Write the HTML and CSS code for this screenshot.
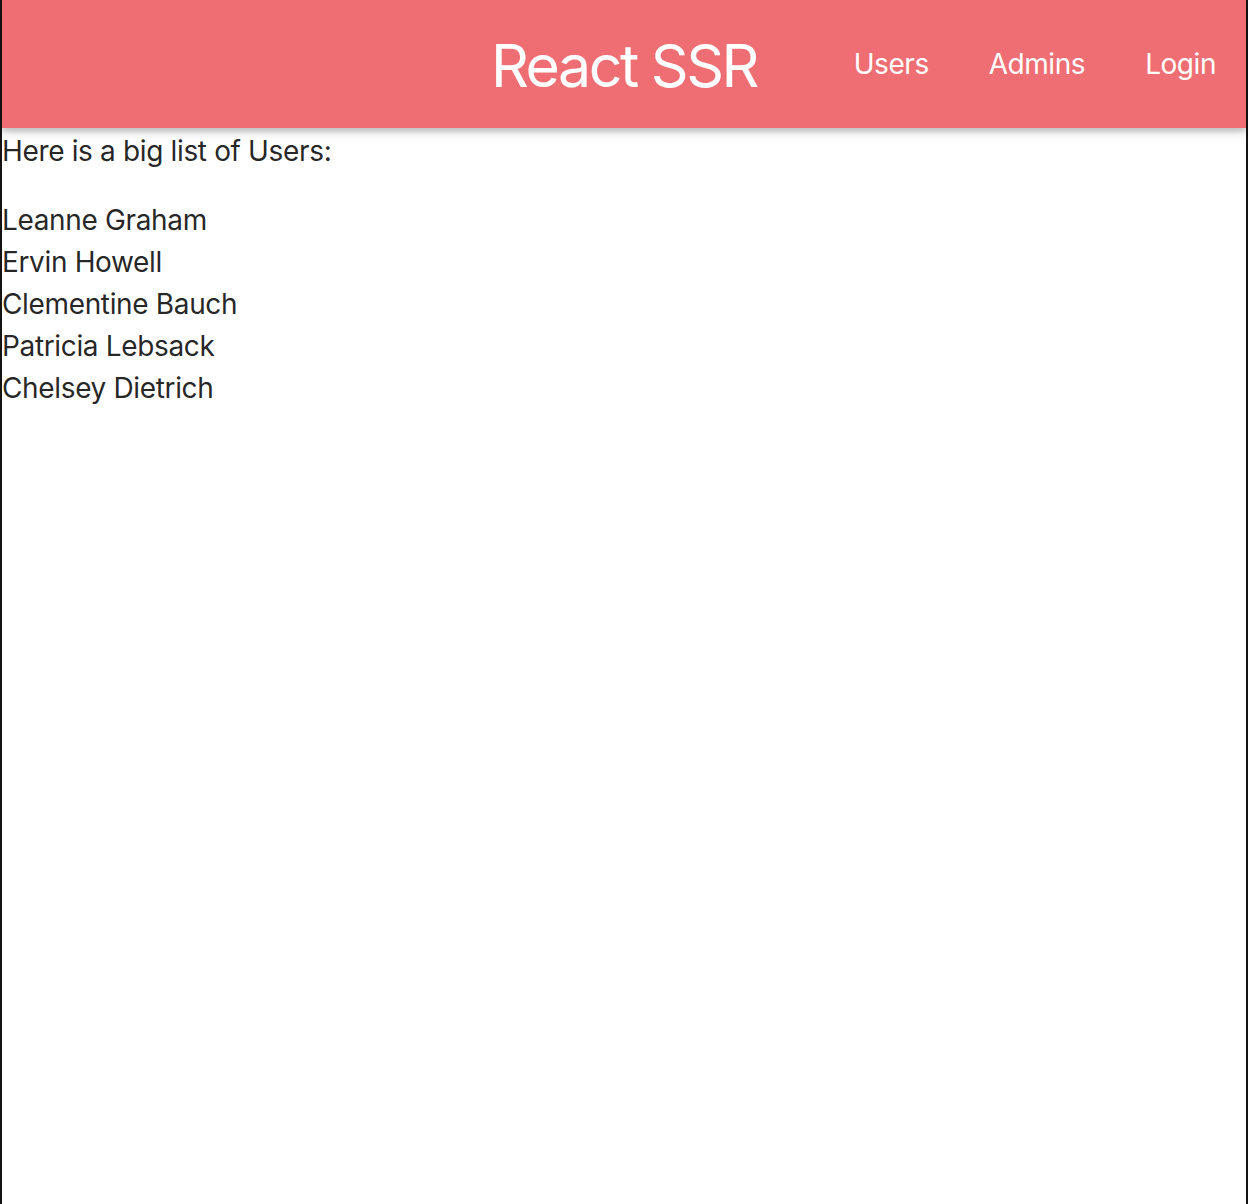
FILE: index.html
```html
<!DOCTYPE html>
<html lang="en">
<head>
<meta charset="utf-8">
<title>React SSR</title>
<link rel="stylesheet" href="styles.css">
</head>
<body>
<div class="page">
  <nav class="nav">
    <a class="brand" href="#">React SSR</a>
    <ul class="links">
      <li><a href="#">Users</a></li>
      <li><a href="#">Admins</a></li>
      <li><a href="#">Login</a></li>
    </ul>
  </nav>
  <main class="content">
    <div class="intro">Here is a big list of Users:</div>
    <ul class="users">
      <li>Leanne Graham</li>
      <li>Ervin Howell</li>
      <li>Clementine Bauch</li>
      <li>Patricia Lebsack</li>
      <li>Chelsey Dietrich</li>
    </ul>
  </main>
</div>
</body>
</html>
```

FILE: styles.css
```css
html {
  background: #141414;
  height: 100%;
}
body {
  margin: 0;
  height: 100%;
  font-family: Inter, Roboto, "Liberation Sans", sans-serif;
  color: rgba(0, 0, 0, 0.87);
}
.page {
  margin: 0 2px;
  height: 100%;
  background: #fff;
  font-size: 28px;
  line-height: 42px;
  letter-spacing: -0.35px;
}
.nav {
  position: relative;
  height: 128px;
  background: #ee6e73;
  box-shadow: 0 4px 10px 0 rgba(0, 0, 0, 0.16), 0 4px 4px 0 rgba(0, 0, 0, 0.12);
  display: flex;
  align-items: center;
  justify-content: flex-end;
}
.brand {
  position: absolute;
  left: 50%;
  top: 0;
  transform: translateX(-50%);
  color: #fff;
  text-decoration: none;
  font-size: 59px;
  letter-spacing: -2.5px;
  line-height: 132px;
}
.links {
  display: flex;
  list-style: none;
  margin: 0;
  padding: 0;
}
.links a {
  display: block;
  padding: 0 30px;
  color: #fff;
  text-decoration: none;
  font-size: 28px;
  letter-spacing: -0.45px;
  line-height: 130px;
}
.content {
  padding: 0;
}
.intro {
  line-height: 46px;
}
.users {
  list-style: none;
  margin: 25px 0 0;
  padding: 0;
}
```
